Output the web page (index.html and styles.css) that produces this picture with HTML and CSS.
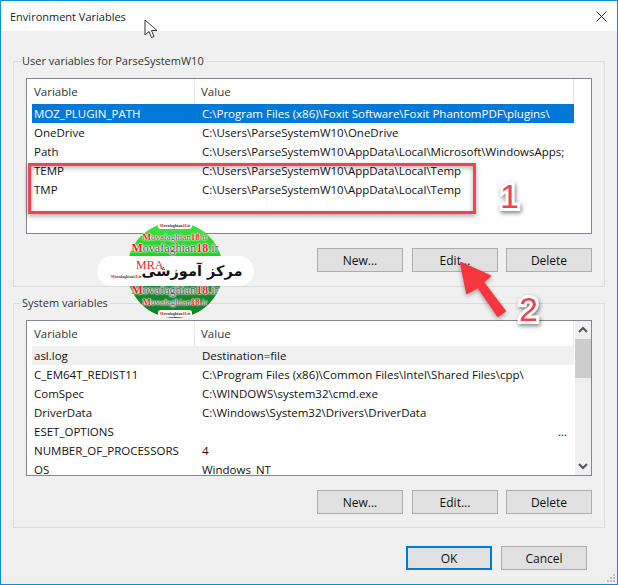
FILE: index.html
```html
<!DOCTYPE html>
<html lang="en">
<head>
  <meta charset="UTF-8" />
  <title>Environment Variables</title>
  <link rel="stylesheet" href="styles.css">
</head>
<body>
  <div class="window">
    <div class="titlebar">
      <span class="title">Environment Variables</span>
      <svg class="close-icon" width="11" height="11" viewBox="0 0 11 11"><path d="M.5.5l10 10M10.5.5l-10 10" stroke="#222" fill="none"/></svg>
    </div>

    <fieldset class="group group-user">
      <legend>User variables for ParseSystemW10</legend>
      <div class="list">
        <div class="rows">
          <div class="list-head">
            <div class="head-name">Variable</div>
            <div class="head-value">Value</div>
          </div>
          <div class="row selected"><span class="name">MOZ_PLUGIN_PATH</span><span>C:\Program Files (x86)\Foxit Software\Foxit PhantomPDF\plugins\</span></div>
          <div class="row"><span class="name">OneDrive</span><span>C:\Users\ParseSystemW10\OneDrive</span></div>
          <div class="row"><span class="name">Path</span><span>C:\Users\ParseSystemW10\AppData\Local\Microsoft\WindowsApps;</span></div>
          <div class="row"><span class="name">TEMP</span><span>C:\Users\ParseSystemW10\AppData\Local\Temp</span></div>
          <div class="row"><span class="name">TMP</span><span>C:\Users\ParseSystemW10\AppData\Local\Temp</span></div>
        </div>
      </div>
      <div class="buttons">
        <button class="btn">New...</button>
        <button class="btn">Edit...</button>
        <button class="btn">Delete</button>
      </div>
    </fieldset>

    <fieldset class="group group-system">
      <legend>System variables</legend>
      <div class="list">
        <div class="rows">
          <div class="list-head">
            <div class="head-name">Variable</div>
            <div class="head-value">Value</div>
          </div>
          <div class="row hovered"><span class="name">asl.log</span><span>Destination=file</span></div>
          <div class="row"><span class="name">C_EM64T_REDIST11</span><span>C:\Program Files (x86)\Common Files\Intel\Shared Files\cpp\</span></div>
          <div class="row"><span class="name">ComSpec</span><span>C:\WINDOWS\system32\cmd.exe</span></div>
          <div class="row"><span class="name">DriverData</span><span>C:\Windows\System32\Drivers\DriverData</span></div>
          <div class="row"><span class="name">ESET_OPTIONS</span><span class="more">...</span></div>
          <div class="row"><span class="name">NUMBER_OF_PROCESSORS</span><span>4</span></div>
          <div class="row"><span class="name">OS</span><span>Windows_NT</span></div>
        </div>
        <div class="scrollbar">
          <svg class="arrow" width="16" height="17" viewBox="0 0 16 17"><path d="M4 11l4-4 4 4" stroke="#555" stroke-width="2" fill="none"/></svg>
          <div class="thumb"></div>
          <svg class="arrow arrow-down" width="16" height="17" viewBox="0 0 16 17"><path d="M4 6l4 4 4-4" stroke="#555" stroke-width="2" fill="none"/></svg>
        </div>
      </div>
      <div class="buttons">
        <button class="btn">New...</button>
        <button class="btn">Edit...</button>
        <button class="btn">Delete</button>
      </div>
    </fieldset>

    <div class="footer">
      <button class="btn btn-default">OK</button>
      <button class="btn">Cancel</button>
    </div>

    <svg class="grip" width="10" height="10" viewBox="0 0 10 10"><path d="M7 1h2v2H7zM4 4h2v2H4zM7 4h2v2H7zM1 7h2v2H1zM4 7h2v2H4zM7 7h2v2H7z" fill="#bdbdbd"/></svg>

    <!-- things drawn on top of the screenshot -->
    <svg class="cursor" width="14" height="20" viewBox="0 0 14 20"><path d="M1 1v15l4-3.5 2.5 6 2.5-1-2.5-6H13z" fill="#fff" stroke="#333"/></svg>
    <div class="mark-box"></div>
    <div class="mark-num mark-one">1</div>
    <div class="mark-num mark-two">2</div>
    <svg class="mark-arrow" width="50" height="60" viewBox="0 0 50 60"><path d="M1 1L30 14 23 20 45 49 38 54 18 25 7 31z" fill="#f7363e" stroke="#f7363e" stroke-width="2" stroke-linejoin="round"/></svg>

    <div class="logo">
      <div class="logo-disc">
        <div class="logo-tiny"><b>M</b>ovafaghian<b>18</b>.ir</div>
        <div class="logo-small logo-top"><b>M</b>ovafaghian<b>18</b>.ir</div>
        <div class="logo-big logo-top-big"><b>M</b>ovafaghian<b>18</b>.ir</div>
        <div class="logo-gap"></div>
        <div class="logo-big"><b>M</b>ovafaghian<b>18</b>.ir</div>
        <div class="logo-small logo-bottom"><b>M</b>ovafaghian<b>18</b>.ir</div>
        <div class="logo-tiny logo-last"><b>M</b>ovafaghian<b>18</b>.ir</div>
      </div>
      <div class="logo-band">
        <span class="logo-url"><b>M</b>ovafaghian<b>18</b>.ir</span>
        <span class="logo-fa" lang="fa" dir="rtl">مرکز آموزشی</span>
        <span class="logo-mra">MRA</span>
      </div>
    </div>
  </div>
</body>
</html>
```

FILE: styles.css
```css
* {
  box-sizing: border-box;
}

body {
  margin: 0;
  font-family: 'Open Sans', 'Noto Sans', sans-serif;
  font-size: 11.5px;
  color: #111;
}

.window {
  position: relative;
  width: 618px;
  height: 585px;
  background: #f0f0f0;
  border: 1px solid #0a8ee8;
  overflow: hidden;
}

.titlebar {
  display: flex;
  align-items: center;
  justify-content: space-between;
  height: 30px;
  padding: 0 10px 0 9px;
  background: #fff;
  color: #222;
  font-size: 11px;
}

.group {
  margin: 0 12px;
  padding: 9px 12px 0;
  border: 1px solid #dcdcdc;
  min-width: 0;
}

.group legend {
  padding: 0 1px;
  margin-left: -5px;
  height: 16px;
  line-height: 16px;
  font-size: 11px;
  color: #333;
}

.group-user {
  margin-top: 22px;
  height: 234px;
}

.group-system {
  margin-top: 8px;
  height: 233px;
}

.list {
  display: flex;
  gap: 1px;
  height: 156px;
  padding: 0 1px 0 5px;
  background: #fff;
  border: 1px solid #828790;
  overflow: hidden;
}

.rows {
  width: 542px;
  flex: none;
}

.list-head {
  display: flex;
  height: 25px;
  line-height: 25px;
  color: #333;
}

.head-name {
  width: 163px;
  padding-left: 2px;
  border-right: 1px solid #e5e5e5;
}

.head-value {
  flex: 1;
  padding-left: 6px;
  border-right: 1px solid #e5e5e5;
}

.row {
  display: flex;
  height: 19px;
  line-height: 19px;
  white-space: nowrap;
}

.row .name {
  width: 168px;
  flex: none;
  padding-left: 2px;
}

.row span + span {
  padding-left: 2px;
}

.row .more {
  margin-left: auto;
  padding-right: 7px;
}

.row.selected {
  background: #0078d7;
  color: #fff;
}

.row.hovered {
  background: #f0f0f0;
}

.scrollbar {
  display: flex;
  flex-direction: column;
  width: 16px;
  background: #f0f0f0;
}

.arrow {
  display: block;
  flex: none;
}

.thumb {
  height: 39px;
  margin: 1px 0 0;
  background: #cdcdcd;
}

.arrow-down {
  margin-top: auto;
}

.buttons {
  display: flex;
  justify-content: flex-end;
  gap: 9px;
  margin-top: 14px;
}

.btn {
  width: 86px;
  height: 24px;
  padding: 0;
  background: #e1e1e1;
  border: 1px solid #adadad;
  font-family: inherit;
  font-size: 12px;
  color: #111;
}

.buttons .btn:last-child {
  margin-left: -1px;
}

.footer {
  display: flex;
  justify-content: flex-end;
  gap: 9px;
  margin-top: 18px;
  padding-right: 30px;
}

.btn-default {
  border: 2px solid #0078d7;
}

.grip {
  position: absolute;
  right: 1px;
  bottom: 1px;
}

/* annotations */
.cursor {
  position: absolute;
  left: 143px;
  top: 18px;
}

.mark-box {
  position: absolute;
  left: 27px;
  top: 162px;
  width: 448px;
  height: 51px;
  border: 3px solid #f4444c;
  box-shadow: 0 2px 5px rgba(0, 0, 0, 0.35), inset 0 2px 5px rgba(0, 0, 0, 0.3);
}

.mark-num {
  position: absolute;
  font-family: 'Liberation Sans', sans-serif;
  font-size: 34px;
  line-height: 34px;
  color: #f0404a;
  -webkit-text-stroke: 6px #fff;
  paint-order: stroke fill;
  filter: drop-shadow(1px 2px 2px rgba(0, 0, 0, 0.5));
}

.mark-one {
  left: 499px;
  top: 178px;
}

.mark-two {
  left: 518px;
  top: 291px;
}

.mark-arrow {
  position: absolute;
  left: 459px;
  top: 261px;
  filter: drop-shadow(0 2px 2px rgba(0, 0, 0, 0.35));
}

.logo {
  position: absolute;
  left: 95px;
  top: 221px;
  width: 158px;
  height: 97px;
}

.logo-disc {
  display: flex;
  flex-direction: column;
  align-items: center;
  width: 96px;
  height: 96px;
  margin: 0 auto;
  border-radius: 50%;
  background: linear-gradient(#3fe53f 0%, #18c818 48%, #1b8f2f 52%, #12802a 100%);
  font-family: 'Liberation Serif', serif;
  white-space: nowrap;
}

.logo-tiny {
  height: 7px;
  padding: 0 2px;
  background: #fff;
  border-radius: 3px;
  font-size: 4px;
  font-weight: bold;
  line-height: 7px;
  color: #333;
  flex: none;
}

.logo-tiny b,
.logo-small b,
.logo-big b,
.logo-url b {
  color: #ee1c25;
}

.logo-small,
.logo-big {
  flex: none;
  color: #555;
  text-shadow: 0 0 2px #fff, 0 0 2px #fff, 0 0 1px #fff, 0 0 1px #fff;
}

.logo-small {
  height: 12px;
  font-size: 9px;
  line-height: 12px;
}

.logo-top {
  margin-top: 2px;
}

.logo-bottom {
  margin-top: -1px;
}

.logo-last {
  margin-top: 2px;
}

.logo-big {
  height: 14px;
  font-size: 12px;
  line-height: 14px;
}

.logo-top-big {
  margin-top: -2px;
}

.logo-gap {
  height: 28px;
  flex: none;
}

.logo-band {
  position: absolute;
  left: 1px;
  top: 34px;
  display: flex;
  align-items: center;
  justify-content: space-between;
  width: 157px;
  height: 30px;
  padding: 0 14px;
  border-radius: 15px;
  background: #fff;
}

.logo-url {
  margin-top: 11px;
  font-family: 'Liberation Serif', serif;
  font-size: 4px;
  font-weight: bold;
  color: #444;
  white-space: nowrap;
}

.logo-mra {
  position: absolute;
  left: 39px;
  top: 2px;
  font-family: 'Liberation Serif', serif;
  font-size: 12px;
  color: #e0282e;
}

.logo-fa {
  font-family: 'DejaVu Sans', sans-serif;
  font-size: 14.5px;
  font-weight: bold;
  color: #111;
  white-space: nowrap;
}
```
